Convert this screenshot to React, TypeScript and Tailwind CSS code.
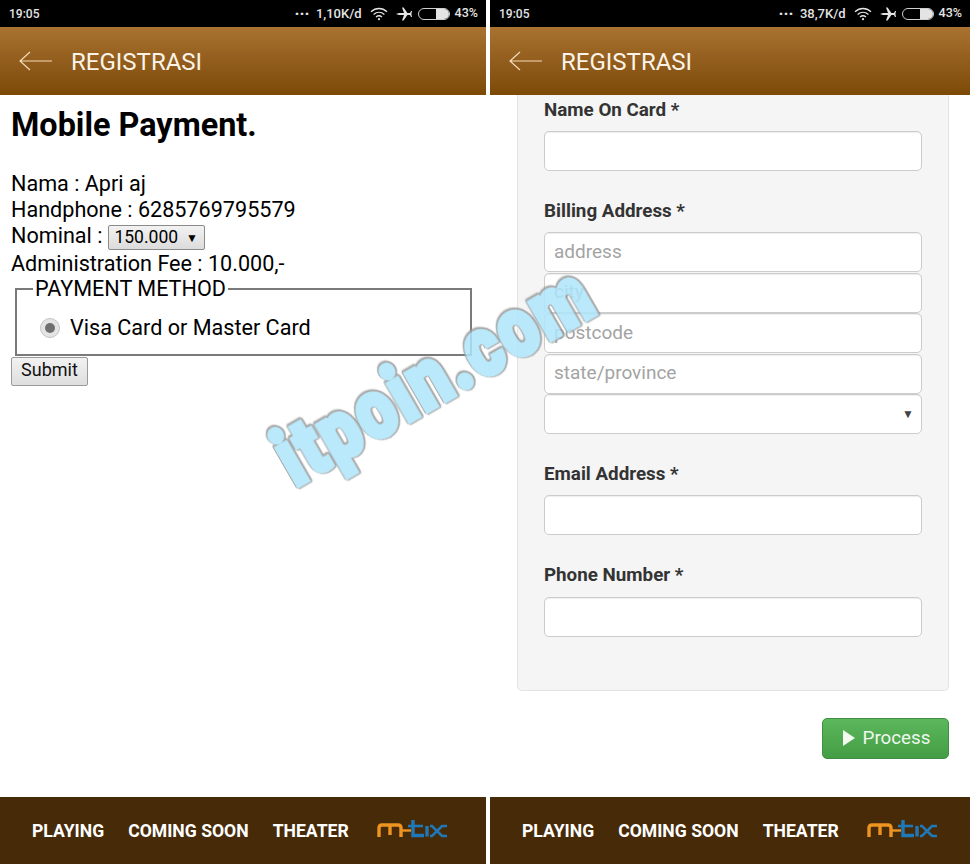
import React from "react";

function StatusBar({ speed }: { speed: string }) {
  return (
    <div className="h-[27px] bg-black flex items-center justify-between pl-[9px] pr-[8px] text-[#e4e4e4] text-[12px] font-medium">
      <span>19:05</span>
      <div className="flex items-center">
        <span className="font-black text-[15px] leading-[12px] -mt-[7px] tracking-[0.5px] mr-[6px]">...</span>
        <span className="text-[13px]">{speed}</span>
        <svg viewBox="0 0 18 14" className="w-[18px] h-[14px] ml-[8px]" fill="none" stroke="#e4e4e4" strokeWidth="1.3">
          <path d="M1 4.8C5.8 .4 12.2 .4 17 4.8" />
          <path d="M3.6 7.4C6.8 4.6 11.2 4.6 14.4 7.4" />
          <path d="M6 9.9C7.8 8.5 10.2 8.5 12 9.9" />
          <circle cx="9" cy="12.2" r="1.1" fill="#e4e4e4" stroke="none" />
        </svg>
        <svg viewBox="0 0 16 14" className="w-[16px] h-[14px] ml-[8px]" fill="#e4e4e4">
          <path d="M0 7 L3 6 L8 6 L6 0.5 L7.6 0.5 L11.4 6 L14 6 L15 4 L16 4 L15.4 7 L16 10 L15 10 L14 8 L11.4 8 L7.6 13.5 L6 13.5 L8 8 L3 8 Z" />
        </svg>
        <div className="w-[32px] h-[12px] ml-[6px] mr-[1px] rounded-full border border-[#cfcfcf] flex justify-end">
          <div className="w-[13px] h-full rounded-r-full bg-[#e4e4e4]" />
        </div>
        <span className="ml-[4px] text-[12.5px]">43%</span>
      </div>
    </div>
  );
}

function Header() {
  return (
    <div className="h-[68px] bg-gradient-to-b from-[#a9722f] to-[#7c4a06] flex items-center pl-[19px]">
      <svg viewBox="0 0 34 20" className="w-[34px] h-[20px]" fill="none" stroke="#f3d9b8" strokeWidth="1.2">
        <path d="M33 10H1M11 1L1 10L11 19" />
      </svg>
      <span className="ml-[18px] mt-[2px] text-[24px] text-[#fbf3e8] leading-none">REGISTRASI</span>
    </div>
  );
}

function Logo() {
  return (
    <svg viewBox="0 0 70 18" className="w-[70px] h-[18px]" fill="none" strokeWidth="3.4">
      <path d="M2 17V8Q2 5 5 5H21Q24 5 24 8V17M13 5V15" stroke="#ee9420" />
      <path d="M25 10.5H34" stroke="#ee9420" strokeWidth="2.4" />
      <path d="M36 0V15.5H47" stroke="#1f78b8" />
      <path d="M31 6H46" stroke="#1f78b8" strokeWidth="2.6" />
      <path d="M50 6V16.5" stroke="#1f78b8" />
      <path d="M53 6H55L60 11L55 16H53M70 6H65L60 11L65 16H70" stroke="#1f78b8" strokeWidth="2.6" />
    </svg>
  );
}

function Footer() {
  return (
    <div className="h-[67px] bg-[#472a08] flex items-center pl-[32px] text-white text-[17.6px] font-bold">
      <span className="mt-[2px]">PLAYING</span>
      <span className="mt-[2px] ml-[24px]">COMING SOON</span>
      <span className="mt-[2px] ml-[24px]">THEATER</span>
      <div className="ml-[28px] -mt-[4px]">
        <Logo />
      </div>
    </div>
  );
}

function Field({ placeholder }: { placeholder?: string }) {
  return (
    <input
      placeholder={placeholder}
      className="block w-[378px] h-[40px] bg-white border border-[#cccccc] rounded-[5px] px-[9px] pb-[2px] text-[19px] placeholder:text-[#a3a3a3] shadow-[inset_0_1px_1px_rgba(0,0,0,0.07)]"
    />
  );
}

function Label({ children }: { children: React.ReactNode }) {
  return <div className="text-[18.8px] leading-[27px] font-bold text-[#333333]">{children}</div>;
}

function PaymentPanel() {
  return (
    <div className="w-[486px] flex flex-col">
      <StatusBar speed="1,10K/d" />
      <Header />
      <div className="flex-1 bg-white px-[11px] text-black text-[21.6px] leading-[26px]">
        <h1 className="text-[32.4px] leading-[38px] font-bold mt-[11px] mb-[27px]">Mobile Payment.</h1>
        <div>Nama : Apri aj</div>
        <div>Handphone : 6285769795579</div>
        <div className="flex items-center h-[28px] -mt-[1px]">
          Nominal :
          <div className="ml-[6px] mt-[3px] w-[97px] h-[25px] bg-gradient-to-b from-[#f2f2f2] to-[#dcdcdc] border border-[#8a8a8a] rounded-[2px] flex items-center pl-[5px] text-[17.5px] leading-none">
            150.000
            <span className="ml-[8px] text-[12px]">▼</span>
          </div>
        </div>
        <div className="mt-[1px]">Administration Fee : 10.000,-</div>
        <fieldset className="ml-[4px] w-[457px] h-[80px] border-2 border-[#7a7a7a] px-[16px] -mt-[1px]">
          <legend className="px-[2px] leading-[26px]">PAYMENT METHOD</legend>
          <div className="flex items-center mt-[13px]">
            <div className="ml-[7px] w-[20px] h-[20px] rounded-full bg-[#e4e4e4] border border-[#c4c4c4] flex items-center justify-center">
              <div className="w-[10px] h-[10px] rounded-full bg-[#6f6f6f]" />
            </div>
            <span className="ml-[10px]">Visa Card or Master Card</span>
          </div>
        </fieldset>
        <button className="block mt-[1px] w-[77px] h-[29px] pb-[3px] bg-gradient-to-b from-[#f2f2f2] to-[#dedede] border border-[#9a9a9a] rounded-[2px] text-[18px] leading-none text-[#111111]">
          Submit
        </button>
      </div>
      <Footer />
    </div>
  );
}

function CardPanel() {
  return (
    <div className="w-[480px] flex flex-col">
      <StatusBar speed="38,7K/d" />
      <Header />
      <div className="flex-1 bg-white pl-[27px] pr-[21px]">
        <div className="h-[596px] bg-[#f5f5f5] border border-t-0 border-[#e3e3e3] rounded-b-[5px] pl-[26px] pt-[2px]">
          <Label>Name On Card *</Label>
          <div className="mt-[7px]">
            <Field />
          </div>
          <div className="mt-[27px]">
            <Label>Billing Address *</Label>
          </div>
          <div className="mt-[7px] flex flex-col gap-[0.5px]">
            <Field placeholder="address" />
            <Field placeholder="city" />
            <Field placeholder="postcode" />
            <Field placeholder="state/province" />
            <div className="relative w-[378px]">
              <Field />
              <span className="absolute right-[8px] top-[11px] text-[12px] text-[#444444]">▼</span>
            </div>
          </div>
          <div className="mt-[27px]">
            <Label>Email Address *</Label>
          </div>
          <div className="mt-[7px]">
            <Field />
          </div>
          <div className="mt-[27px]">
            <Label>Phone Number *</Label>
          </div>
          <div className="mt-[8px]">
            <Field />
          </div>
        </div>
        <div className="flex justify-end mt-[27px]">
          <button className="w-[127px] h-[41px] pl-[2px] pb-[1px] rounded-[5px] border border-[#3f8f42] bg-gradient-to-b from-[#5cb85c] to-[#449d44] flex items-center justify-center text-[#eef8ee] text-[18.8px]">
            <span className="w-0 h-0 border-y-[8px] border-y-transparent border-l-[12px] border-l-[#f2faf2] mr-[8px]" />
            Process
          </button>
        </div>
      </div>
      <Footer />
    </div>
  );
}

export default function App() {
  return (
    <div className="relative w-[970px] h-[864px] overflow-hidden bg-white flex gap-[4px] font-['Roboto',sans-serif]">
      <PaymentPanel />
      <CardPanel />
      {/* watermark over both panels */}
      <div className="absolute left-[254px] top-[335px] w-[360px] h-[80px] text-center origin-center -rotate-[30deg] scale-y-[1.2] opacity-85 font-black text-[68px] tracking-[2.5px] leading-[80px] text-[#aee6fb] [-webkit-text-stroke:4px_#aee6fb] [filter:drop-shadow(1px_1px_0_#9a9a9a)_drop-shadow(-1px_-1px_0_#9a9a9a)_drop-shadow(1px_-1px_0_#9a9a9a)] pointer-events-none whitespace-nowrap">
        itpoin.com
      </div>
    </div>
  );
}
